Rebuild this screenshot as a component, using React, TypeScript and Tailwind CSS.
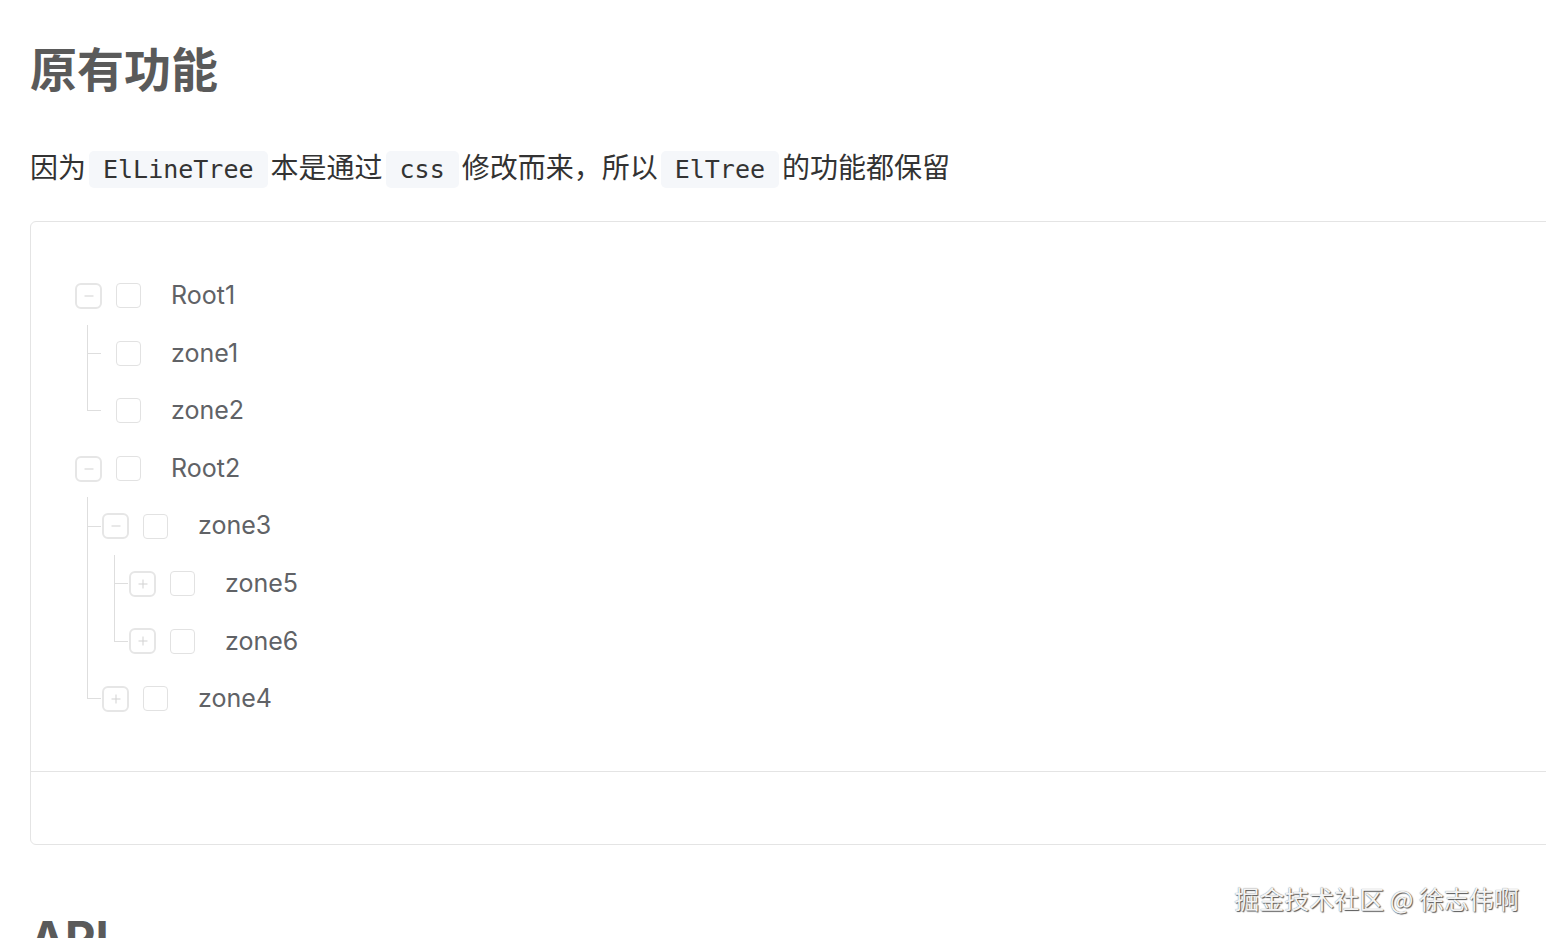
import React from 'react';

interface TreeNode {
  label: string;
  children?: TreeNode[];
}

const data: TreeNode[] = [
  { label: 'Root1', children: [{ label: 'zone1' }, { label: 'zone2' }] },
  {
    label: 'Root2',
    children: [
      {
        label: 'zone3',
        children: [
          { label: 'zone5', children: [] },
          { label: 'zone6', children: [] },
        ],
      },
      { label: 'zone4', children: [] },
    ],
  },
];

const ExpandIcon = ({ open }: { open: boolean }) => (
  <div className="relative w-[27px] h-[26px] shrink-0 rounded-[6px] border-2 border-[#e6e6e6] bg-white">
    <span className="absolute left-1/2 top-1/2 w-[9px] h-px -translate-x-1/2 -translate-y-1/2 bg-[#d2d2d2]" />
    {!open && (
      <span className="absolute left-1/2 top-1/2 w-px h-[9px] -translate-x-1/2 -translate-y-1/2 bg-[#d2d2d2]" />
    )}
  </div>
);

const Node = ({ node, isChild, isLast }: { node: TreeNode; isChild: boolean; isLast: boolean }) => {
  const hasKids = node.children !== undefined;
  const open = !!node.children && node.children.length > 0;
  return (
    <div className="relative">
      {/* connector lines */}
      {isChild && (
        <>
          <span
            className={
              isLast
                ? 'absolute left-[-15px] top-0 w-px h-[28.8px] bg-[#dedede]'
                : 'absolute left-[-15px] top-0 bottom-0 w-px bg-[#dedede]'
            }
          />
          <span className="absolute left-[-15px] top-[28.3px] w-[14px] h-px bg-[#dedede]" />
        </>
      )}
      <div className="flex items-center h-[57.6px]">
        {hasKids ? <ExpandIcon open={open} /> : <div className="w-[14px] shrink-0" />}
        <div className={hasKids ? 'ml-[14px] w-[25px] h-[25px] rounded-[4px] border border-[#e2e2e2] bg-white' : 'w-[25px] h-[25px] rounded-[4px] border border-[#e2e2e2] bg-white'} />
        <span className="ml-[30px] text-[25px] text-[#606266] font-['Inter',sans-serif]">{node.label}</span>
      </div>
      {open && (
        <div className="pl-[27px]">
          {node.children!.map((c, i) => (
            <Node key={c.label} node={c} isChild isLast={i === node.children!.length - 1} />
          ))}
        </div>
      )}
    </div>
  );
};

const Code = ({ children }: { children: React.ReactNode }) => (
  <code className="mx-[3px] px-[14px] py-[4px] rounded-[5px] bg-[#f5f7fa] text-[25px] text-[#333] font-['DejaVu_Sans_Mono',monospace]">
    {children}
  </code>
);

export default function App() {
  return (
    <div className="relative w-[1546px] h-[938px] overflow-hidden bg-white font-['Inter','Noto_Sans_CJK_SC',sans-serif]">
      <h2 className="ml-[30px] pt-[42px] text-[47px] leading-[56px] font-bold text-[#5a5a5a]">原有功能</h2>

      <p className="ml-[30px] mt-[48px] text-[28px] leading-[45px] text-[#333] whitespace-nowrap">
        因为<Code>ElLineTree</Code>本是通过<Code>css</Code>修改而来，所以<Code>ElTree</Code>的功能都保留
      </p>

      {/* demo card */}
      <div className="ml-[30px] mt-[29px] w-[1560px] rounded-[6px] border border-[#e4e4e4]">
        <div className="pl-[44px] pt-[45px] pb-[43px]">
          {data.map((n) => (
            <Node key={n.label} node={n} isChild={false} isLast={false} />
          ))}
        </div>
        <div className="h-[73px] border-t border-[#e4e4e4]" />
      </div>

      <h2 className="ml-[30px] mt-[65px] text-[47px] leading-[56px] font-bold text-[#5a5a5a]">API</h2>

      {/* watermark */}
      <div className="absolute top-[880px] right-[27px] text-[25px] leading-[36px] text-[#f4f4f4] font-['Noto_Sans_CJK_SC',sans-serif] [text-shadow:1px_1px_1px_#555,0_0_1px_#777]">
        掘金技术社区 @ 徐志伟啊
      </div>
    </div>
  );
}
